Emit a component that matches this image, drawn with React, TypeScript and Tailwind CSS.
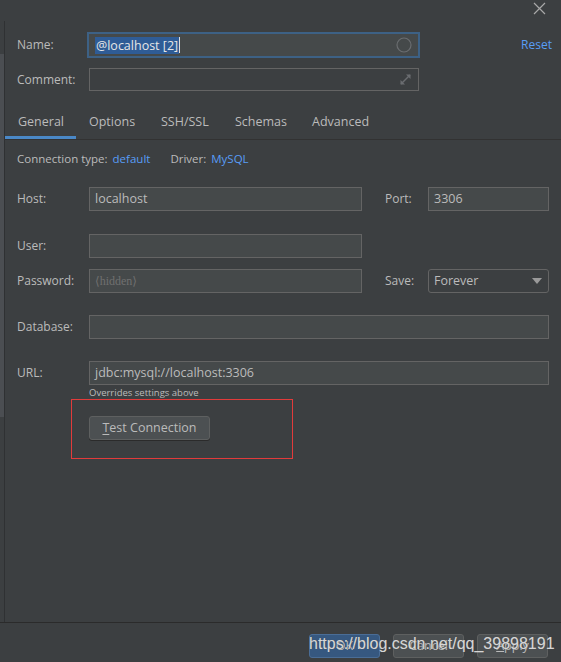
import React from "react";

const font = { fontFamily: '"Open Sans", "Noto Sans", Arial, sans-serif' };

function Label({ children, w = "w-[72px]" }: { children: React.ReactNode; w?: string }) {
  return <div className={`${w} shrink-0 text-[12px] text-[#bbbbbb]`}>{children}</div>;
}

function Field({ className = "", children }: { className?: string; children?: React.ReactNode }) {
  return (
    <div
      className={`h-[24px] border border-[#646464] bg-[#45494a] flex items-center px-[5px] text-[12.5px] text-[#bbbbbb] ${className}`}
    >
      {children}
    </div>
  );
}

export default function App() {
  return (
    <div className="w-[561px] h-[662px] bg-[#3c3f41] relative overflow-hidden flex flex-col" style={font}>
      {/* title bar */}
      <div className="h-[21px] shrink-0 flex justify-end items-start pr-[15px] pt-[2px]">
        <svg width="13" height="13" viewBox="0 0 13 13">
          <path d="M1 1 L12 12 M12 1 L1 12" stroke="#a8a8a8" strokeWidth="1.2" />
        </svg>
      </div>
      <div className="flex flex-1 min-h-0">
        {/* left strip */}
        <div className="w-[5px] shrink-0 flex flex-col border-r border-[#2f3133]">
          <div className="h-[33px]" />
          <div className="h-[363px] bg-[#4b4e52]" />
        </div>
        {/* content */}
        <div className="flex-1 flex flex-col">
          {/* name row */}
          <div className="flex items-center mt-[11px] pl-[12px] h-[26px]">
            <Label w="w-[70px]">Name:</Label>
            <div className="w-[333px] h-[26px] border-2 border-[#3d6185] bg-[#45494a] flex items-center pl-[6px] pr-[6px]">
              <span className="bg-[#2f5c96] text-[#e6e6e6] text-[12.5px] leading-[17px] px-[1px]">@localhost [2]</span>
              <span className="w-[1px] h-[16px] bg-[#dddddd]" />
              <div className="flex-1" />
              <svg width="16" height="16" viewBox="0 0 16 16">
                <circle cx="8" cy="8" r="7" fill="none" stroke="#6a6d70" strokeWidth="1.2" />
              </svg>
            </div>
            <div className="flex-1" />
            <div className="text-[12px] text-[#589df6] mr-[9px]">Reset</div>
          </div>
          {/* comment row */}
          <div className="flex items-center mt-[10px] pl-[12px] h-[23px]">
            <Label>Comment:</Label>
            <div className="w-[330px] h-[23px] border border-[#646464] flex items-center justify-end pr-[6px]">
              <svg width="13" height="13" viewBox="0 0 13 13">
                <path d="M2 11 L11 2" stroke="#6a6d70" strokeWidth="1.4" />
                <path d="M7 1.5 L11.5 1.5 L11.5 6 Z" fill="#6a6d70" />
                <path d="M1.5 7 L1.5 11.5 L6 11.5 Z" fill="#6a6d70" />
              </svg>
            </div>
          </div>
          {/* tabs */}
          <div className="mt-[17px] h-[32px] flex items-stretch border-b border-[#323232]">
            {[
              ["General", true, "w-[71px]"],
              ["Options", false, "w-[72px]"],
              ["SSH/SSL", false, "w-[74px]"],
              ["Schemas", false, "w-[77px]"],
              ["Advanced", false, "w-[80px]"],
            ].map(([t, active, w]) => (
              <div
                key={t as string}
                className={`${w} flex items-center pl-[13px] text-[12.5px] text-[#bbbbbb] border-b-[3px] ${
                  active ? "border-[#4a88c7]" : "border-transparent"
                }`}
              >
                {t}
              </div>
            ))}
          </div>
          {/* connection type */}
          <div className="flex items-center mt-[11px] pl-[12px] h-[16px] text-[11.5px]">
            <span className="text-[#bbbbbb]">Connection type:</span>
            <span className="text-[#589df6] ml-[5px]">default</span>
            <span className="text-[#bbbbbb] ml-[20px]">Driver:</span>
            <span className="text-[#589df6] ml-[5px]">MySQL</span>
          </div>
          {/* host */}
          <div className="flex items-center mt-[20px] pl-[12px]">
            <Label>Host:</Label>
            <Field className="w-[273px]">localhost</Field>
            <div className="w-[23px]" />
            <Label w="w-[43px]">Port:</Label>
            <Field className="w-[121px]">3306</Field>
          </div>
          {/* user */}
          <div className="flex items-center mt-[23px] pl-[12px]">
            <Label>User:</Label>
            <Field className="w-[273px]" />
          </div>
          {/* password */}
          <div className="flex items-center mt-[11px] pl-[12px]">
            <Label>Password:</Label>
            <Field className="w-[273px]">
              <span className="text-[12px] text-[#707070]" style={{ fontFamily: '"Liberation Serif", "DejaVu Serif", serif' }}>
                ⟨hidden⟩
              </span>
            </Field>
            <div className="w-[23px]" />
            <Label w="w-[43px]">Save:</Label>
            <div className="w-[121px] h-[24px] rounded-[3px] border border-[#646464] flex items-center pl-[5px] pr-[6px] text-[12.5px] text-[#bbbbbb]">
              <span className="flex-1">Forever</span>
              <svg width="10" height="6" viewBox="0 0 10 6">
                <path d="M0 0 L10 0 L5 6 Z" fill="#9a9a9a" />
              </svg>
            </div>
          </div>
          {/* database */}
          <div className="flex items-center mt-[22px] pl-[12px]">
            <Label>Database:</Label>
            <Field className="w-[460px] h-[23px]" />
          </div>
          {/* url */}
          <div className="flex items-center mt-[22px] pl-[12px]">
            <Label>URL:</Label>
            <Field className="w-[460px] h-[23px]">jdbc:mysql://localhost:3306</Field>
          </div>
          <div className="pl-[84px] mt-[1px] text-[9.5px] text-[#bbbbbb] h-[14px] leading-[14px]">Overrides settings above</div>
          {/* test connection */}
          <div className="pl-[84px] mt-[16px]">
            <div className="w-[121px] h-[24px] rounded-[3px] border border-[#5e6060] bg-[#4c5052] flex items-center justify-center text-[12.5px] text-[#bbbbbb] shadow-[0_1px_0_#2b2b2b]">
              <span>
                <span className="underline underline-offset-2">T</span>est Connection
              </span>
            </div>
          </div>
          <div className="flex-1" />
        </div>
      </div>
      {/* footer */}
      <div className="h-[40px] shrink-0 border-t border-[#2b2b2b] flex items-start justify-end gap-[13px] pt-[11px] pr-[13px]">
        <div className="w-[71px] h-[24px] rounded-[3px] bg-[#365880] border border-[#4a6d96] flex items-center justify-center text-[12.5px] text-[#bbbbbb]">
          OK
        </div>
        <div className="w-[71px] h-[24px] rounded-[3px] bg-[#4c5052] border border-[#5e6060] flex items-center justify-center text-[12.5px] text-[#bbbbbb]">
          Cancel
        </div>
        <div className="w-[71px] h-[24px] rounded-[3px] bg-[#4c5052] border border-[#5e6060] flex items-center justify-center text-[12.5px] text-[#bbbbbb]">
          <span>
            <span className="underline">A</span>pply
          </span>
        </div>
      </div>
      {/* red annotation */}
      <div className="absolute left-[71px] top-[399px] w-[222px] h-[60px] border border-[#e23b3b]" />
      {/* watermark */}
      <div
        className="absolute left-[309px] top-[632px] text-[16px] text-[#e8e8e8]/90 whitespace-nowrap"
        style={{ fontFamily: '"Liberation Sans", Arial, sans-serif', textShadow: "0 0 1px #555" }}
      >
        https://blog.csdn.net/qq_39898191
      </div>
    </div>
  );
}
